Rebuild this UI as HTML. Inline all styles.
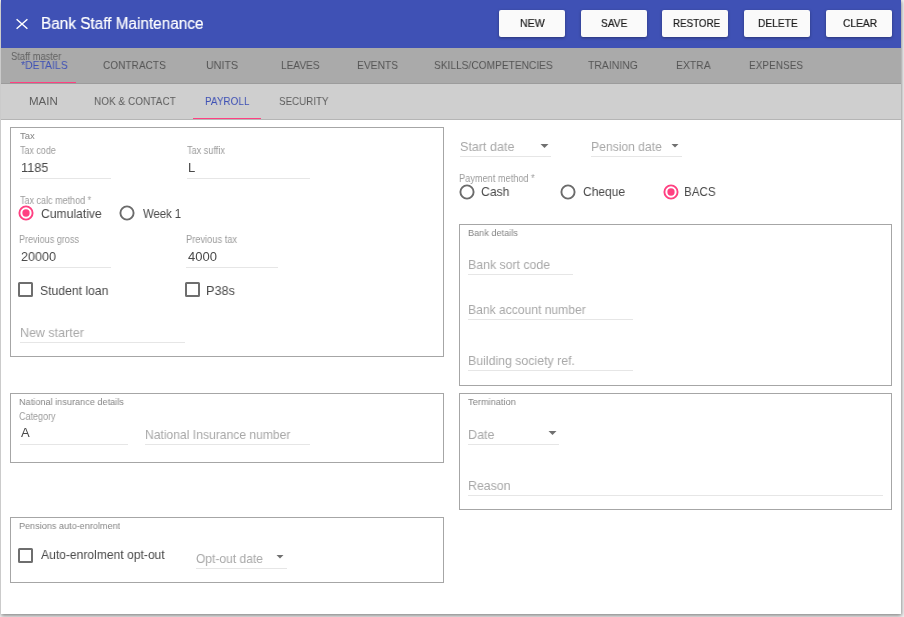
<!DOCTYPE html>
<html><head><meta charset="utf-8"><style>
html,body{margin:0;padding:0;width:904px;height:617px;overflow:hidden;background:#f0f0f0;}
body{position:relative;font-family:"Liberation Sans",sans-serif;}
.r{position:absolute;}
.t{position:absolute;white-space:nowrap;transform-origin:0 0;will-change:transform;}
</style></head><body>
<div class="r" style="left:1px;top:0;width:900px;height:614px;background:#fff;box-shadow:0 2px 4px rgba(0,0,0,0.3),1px 1px 3px rgba(0,0,0,0.2)"></div>
<div class="r" style="left:1px;top:0px;width:900px;height:48px;background:#3f51b5;"></div>
<div class="r" style="left:1px;top:48px;width:900px;height:36px;background:#aaaaaa;"></div>
<div class="r" style="left:1px;top:84px;width:900px;height:36px;background:#cfcfcf;"></div>
<div class="r" style="left:1px;top:119px;width:900px;height:1px;background:#b5b5b5;"></div>
<div class="r" style="left:1px;top:83px;width:900px;height:1px;background:#9c9c9c;"></div>
<div class="r" style="left:10px;top:82px;width:66px;height:1px;background:#ff4081;"></div>
<div class="r" style="left:193px;top:118px;width:68px;height:1px;background:#ff4081;"></div>
<svg class="r" style="left:14px;top:16px" width="16" height="16" viewBox="0 0 16 16"><path d="M2.6 3.2 L13.4 12.8 M13.4 3.2 L2.6 12.8" stroke="#fff" stroke-width="1.45" fill="none"/></svg>
<div class="r" style="left:499px;top:10px;width:66px;height:27px;background:#fafafa;border-radius:2px;box-shadow:0 1px 3px rgba(0,0,0,0.35)"></div>
<div class="r" style="left:581px;top:10px;width:66px;height:27px;background:#fafafa;border-radius:2px;box-shadow:0 1px 3px rgba(0,0,0,0.35)"></div>
<div class="r" style="left:662px;top:10px;width:66px;height:27px;background:#fafafa;border-radius:2px;box-shadow:0 1px 3px rgba(0,0,0,0.35)"></div>
<div class="r" style="left:744px;top:10px;width:66px;height:27px;background:#fafafa;border-radius:2px;box-shadow:0 1px 3px rgba(0,0,0,0.35)"></div>
<div class="r" style="left:826px;top:10px;width:66px;height:27px;background:#fafafa;border-radius:2px;box-shadow:0 1px 3px rgba(0,0,0,0.35)"></div>
<div class="r" style="left:10px;top:127px;width:434px;height:230px;box-sizing:border-box;border:1px solid #a6a6a6"></div>
<div class="r" style="left:10px;top:393px;width:434px;height:70px;box-sizing:border-box;border:1px solid #a6a6a6"></div>
<div class="r" style="left:10px;top:517px;width:434px;height:66px;box-sizing:border-box;border:1px solid #a6a6a6"></div>
<div class="r" style="left:459px;top:224px;width:433px;height:162px;box-sizing:border-box;border:1px solid #a6a6a6"></div>
<div class="r" style="left:459px;top:393px;width:433px;height:117px;box-sizing:border-box;border:1px solid #a6a6a6"></div>
<div class="r" style="left:20px;top:178px;width:91px;height:1px;background:#e6e6e6;"></div>
<div class="r" style="left:187px;top:178px;width:123px;height:1px;background:#e6e6e6;"></div>
<div class="r" style="left:20px;top:267px;width:91px;height:1px;background:#e6e6e6;"></div>
<div class="r" style="left:186px;top:267px;width:92px;height:1px;background:#e6e6e6;"></div>
<div class="r" style="left:20px;top:342px;width:165px;height:1px;background:#e6e6e6;"></div>
<div class="r" style="left:20px;top:444px;width:108px;height:1px;background:#e6e6e6;"></div>
<div class="r" style="left:145px;top:444px;width:165px;height:1px;background:#e6e6e6;"></div>
<div class="r" style="left:196px;top:568px;width:91px;height:1px;background:#e6e6e6;"></div>
<div class="r" style="left:460px;top:156px;width:91px;height:1px;background:#e6e6e6;"></div>
<div class="r" style="left:591px;top:156px;width:91px;height:1px;background:#e6e6e6;"></div>
<div class="r" style="left:468px;top:274px;width:105px;height:1px;background:#e6e6e6;"></div>
<div class="r" style="left:468px;top:319px;width:165px;height:1px;background:#e6e6e6;"></div>
<div class="r" style="left:468px;top:370px;width:165px;height:1px;background:#e6e6e6;"></div>
<div class="r" style="left:468px;top:444px;width:91px;height:1px;background:#e6e6e6;"></div>
<div class="r" style="left:468px;top:495px;width:415px;height:1px;background:#e6e6e6;"></div>
<svg class="r" style="left:15.5px;top:203px" width="20" height="20" viewBox="0 0 20 20"><circle cx="10" cy="10" r="6.6" fill="none" stroke="#ff4081" stroke-width="1.9"/><circle cx="10" cy="10" r="3.65" fill="#ff4081"/></svg>
<svg class="r" style="left:117px;top:203px" width="20" height="20" viewBox="0 0 20 20"><circle cx="10" cy="10" r="6.6" fill="none" stroke="#6b6b6b" stroke-width="1.9"/></svg>
<svg class="r" style="left:456.5px;top:182px" width="20" height="20" viewBox="0 0 20 20"><circle cx="10" cy="10" r="6.6" fill="none" stroke="#6b6b6b" stroke-width="1.9"/></svg>
<svg class="r" style="left:558px;top:182px" width="20" height="20" viewBox="0 0 20 20"><circle cx="10" cy="10" r="6.6" fill="none" stroke="#6b6b6b" stroke-width="1.9"/></svg>
<svg class="r" style="left:660.5px;top:182px" width="20" height="20" viewBox="0 0 20 20"><circle cx="10" cy="10" r="6.6" fill="none" stroke="#ff4081" stroke-width="1.9"/><circle cx="10" cy="10" r="3.65" fill="#ff4081"/></svg>
<div class="r" style="left:18px;top:282px;width:15px;height:15px;box-sizing:border-box;border:2px solid #6e6e6e;border-radius:1.5px"></div>
<div class="r" style="left:185px;top:282px;width:15px;height:15px;box-sizing:border-box;border:2px solid #6e6e6e;border-radius:1.5px"></div>
<div class="r" style="left:18px;top:548px;width:15px;height:15px;box-sizing:border-box;border:2px solid #6e6e6e;border-radius:1.5px"></div>
<svg class="r" style="left:0;top:0" width="904" height="617"><path d="M540.5 144 L548.5 144 L544.5 148 Z" fill="#707070"/></svg>
<svg class="r" style="left:0;top:0" width="904" height="617"><path d="M671.5 144 L678.5 144 L675 147.5 Z" fill="#707070"/></svg>
<svg class="r" style="left:0;top:0" width="904" height="617"><path d="M548.5 431 L556.5 431 L552.5 435 Z" fill="#707070"/></svg>
<svg class="r" style="left:0;top:0" width="904" height="617"><path d="M276.5 555 L283.5 555 L280 558.5 Z" fill="#707070"/></svg>
<span class="t" id="t0" style="left:40.74px;top:16.45px;font-size:16.0px;line-height:16.0px;color:#ffffff;-webkit-text-stroke:0.2px #fff;transform:scaleX(0.9579)">Bank Staff Maintenance</span>
<span class="t" id="t1" style="left:519.73px;top:18.26px;font-size:11.5px;line-height:11.5px;color:#1c1c1c;-webkit-text-stroke:0.2px #1c1c1c;transform:scaleX(0.9208)">NEW</span>
<span class="t" id="t2" style="left:600.54px;top:18.26px;font-size:11.5px;line-height:11.5px;color:#1c1c1c;-webkit-text-stroke:0.2px #1c1c1c;transform:scaleX(0.8798)">SAVE</span>
<span class="t" id="t3" style="left:672.80px;top:18.26px;font-size:11.5px;line-height:11.5px;color:#1c1c1c;-webkit-text-stroke:0.2px #1c1c1c;transform:scaleX(0.8494)">RESTORE</span>
<span class="t" id="t4" style="left:757.76px;top:18.26px;font-size:11.5px;line-height:11.5px;color:#1c1c1c;-webkit-text-stroke:0.2px #1c1c1c;transform:scaleX(0.8892)">DELETE</span>
<span class="t" id="t5" style="left:842.98px;top:18.26px;font-size:11.5px;line-height:11.5px;color:#1c1c1c;-webkit-text-stroke:0.2px #1c1c1c;transform:scaleX(0.8918)">CLEAR</span>
<span class="t" id="t6" style="left:11.08px;top:51.53px;font-size:10px;line-height:10px;color:#626262;transform:scaleX(0.9346)">Staff master</span>
<span class="t" id="t7" style="left:21.33px;top:60.26px;font-size:11.5px;line-height:11.5px;color:#3f51b5;transform:scaleX(0.9053)">*DETAILS</span>
<span class="t" id="t8" style="left:103.49px;top:60.26px;font-size:11.5px;line-height:11.5px;color:#555555;transform:scaleX(0.8773)">CONTRACTS</span>
<span class="t" id="t9" style="left:206.17px;top:60.26px;font-size:11.5px;line-height:11.5px;color:#555555;transform:scaleX(0.9309)">UNITS</span>
<span class="t" id="t10" style="left:280.67px;top:60.26px;font-size:11.5px;line-height:11.5px;color:#555555;transform:scaleX(0.8781)">LEAVES</span>
<span class="t" id="t11" style="left:357.16px;top:60.26px;font-size:11.5px;line-height:11.5px;color:#555555;transform:scaleX(0.8936)">EVENTS</span>
<span class="t" id="t12" style="left:434.04px;top:60.26px;font-size:11.5px;line-height:11.5px;color:#555555;transform:scaleX(0.8847)">SKILLS/COMPETENCIES</span>
<span class="t" id="t13" style="left:587.77px;top:60.26px;font-size:11.5px;line-height:11.5px;color:#555555;transform:scaleX(0.9066)">TRAINING</span>
<span class="t" id="t14" style="left:676.15px;top:60.26px;font-size:11.5px;line-height:11.5px;color:#555555;transform:scaleX(0.9043)">EXTRA</span>
<span class="t" id="t15" style="left:749.18px;top:60.26px;font-size:11.5px;line-height:11.5px;color:#555555;transform:scaleX(0.8723)">EXPENSES</span>
<span class="t" id="t16" style="left:29.06px;top:96.26px;font-size:11.5px;line-height:11.5px;color:#5e5e5e;transform:scaleX(0.9974)">MAIN</span>
<span class="t" id="t17" style="left:93.58px;top:96.26px;font-size:11.5px;line-height:11.5px;color:#5e5e5e;transform:scaleX(0.8720)">NOK &amp; CONTACT</span>
<span class="t" id="t18" style="left:204.88px;top:96.26px;font-size:11.5px;line-height:11.5px;color:#3f51b5;transform:scaleX(0.8661)">PAYROLL</span>
<span class="t" id="t19" style="left:279.06px;top:96.26px;font-size:11.5px;line-height:11.5px;color:#5e5e5e;transform:scaleX(0.8506)">SECURITY</span>
<span class="t" id="t20" style="left:19.79px;top:130.96px;font-size:9.5px;line-height:9.5px;color:#858585;transform:scaleX(1.0000)">Tax</span>
<span class="t" id="t21" style="left:19.80px;top:145.53px;font-size:10px;line-height:10px;color:#9c9c9c;transform:scaleX(0.8922)">Tax code</span>
<span class="t" id="t22" style="left:21.03px;top:160.99px;font-size:13.0px;line-height:13.0px;color:#4a4a4a;transform:scaleX(0.9787)">1185</span>
<span class="t" id="t23" style="left:186.79px;top:145.53px;font-size:10px;line-height:10px;color:#9c9c9c;transform:scaleX(0.9139)">Tax suffix</span>
<span class="t" id="t24" style="left:187.53px;top:160.99px;font-size:13px;line-height:13px;color:#4a4a4a;transform:scaleX(1.0000)">L</span>
<span class="t" id="t25" style="left:19.80px;top:195.53px;font-size:10px;line-height:10px;color:#9c9c9c;transform:scaleX(0.9014)">Tax calc method *</span>
<span class="t" id="t26" style="left:40.63px;top:206.99px;font-size:13.0px;line-height:13.0px;color:#4a4a4a;transform:scaleX(0.9336)">Cumulative</span>
<span class="t" id="t27" style="left:142.95px;top:206.99px;font-size:13.0px;line-height:13.0px;color:#4a4a4a;transform:scaleX(0.8714)">Week 1</span>
<span class="t" id="t28" style="left:19.26px;top:234.53px;font-size:10px;line-height:10px;color:#9c9c9c;transform:scaleX(0.9052)">Previous gross</span>
<span class="t" id="t29" style="left:20.87px;top:249.99px;font-size:13.0px;line-height:13.0px;color:#4a4a4a;transform:scaleX(0.9660)">20000</span>
<span class="t" id="t30" style="left:185.64px;top:234.53px;font-size:10px;line-height:10px;color:#9c9c9c;transform:scaleX(0.9280)">Previous tax</span>
<span class="t" id="t31" style="left:187.70px;top:249.99px;font-size:13.0px;line-height:13.0px;color:#4a4a4a;transform:scaleX(0.9960)">4000</span>
<span class="t" id="t32" style="left:40.20px;top:283.99px;font-size:13.0px;line-height:13.0px;color:#4a4a4a;transform:scaleX(0.9368)">Student loan</span>
<span class="t" id="t33" style="left:206.36px;top:283.99px;font-size:13.0px;line-height:13.0px;color:#4a4a4a;transform:scaleX(0.9717)">P38s</span>
<span class="t" id="t34" style="left:19.73px;top:325.99px;font-size:13.0px;line-height:13.0px;color:#a8a8a8;transform:scaleX(0.9597)">New starter</span>
<span class="t" id="t35" style="left:19.25px;top:396.96px;font-size:9.5px;line-height:9.5px;color:#858585;transform:scaleX(0.9641)">National insurance details</span>
<span class="t" id="t36" style="left:19.04px;top:411.53px;font-size:10px;line-height:10px;color:#9c9c9c;transform:scaleX(0.9014)">Category</span>
<span class="t" id="t37" style="left:21.27px;top:425.99px;font-size:13.0px;line-height:13.0px;color:#4a4a4a;transform:scaleX(1.0000)">A</span>
<span class="t" id="t38" style="left:144.91px;top:427.99px;font-size:13.0px;line-height:13.0px;color:#a8a8a8;transform:scaleX(0.9315)">National Insurance number</span>
<span class="t" id="t39" style="left:19.25px;top:520.96px;font-size:9.5px;line-height:9.5px;color:#858585;transform:scaleX(0.9573)">Pensions auto-enrolment</span>
<span class="t" id="t40" style="left:41.48px;top:547.99px;font-size:13.0px;line-height:13.0px;color:#4a4a4a;transform:scaleX(0.9304)">Auto-enrolment opt-out</span>
<span class="t" id="t41" style="left:196.43px;top:551.99px;font-size:13.0px;line-height:13.0px;color:#a8a8a8;transform:scaleX(0.9258)">Opt-out date</span>
<span class="t" id="t42" style="left:460.43px;top:139.99px;font-size:13.0px;line-height:13.0px;color:#a8a8a8;transform:scaleX(0.9656)">Start date</span>
<span class="t" id="t43" style="left:590.50px;top:139.99px;font-size:13.0px;line-height:13.0px;color:#a8a8a8;transform:scaleX(0.9334)">Pension date</span>
<span class="t" id="t44" style="left:459.25px;top:173.53px;font-size:10px;line-height:10px;color:#9c9c9c;transform:scaleX(0.9202)">Payment method *</span>
<span class="t" id="t45" style="left:480.88px;top:184.99px;font-size:13.0px;line-height:13.0px;color:#4a4a4a;transform:scaleX(0.9395)">Cash</span>
<span class="t" id="t46" style="left:582.59px;top:184.99px;font-size:13.0px;line-height:13.0px;color:#4a4a4a;transform:scaleX(0.9255)">Cheque</span>
<span class="t" id="t47" style="left:684.45px;top:184.99px;font-size:13.0px;line-height:13.0px;color:#4a4a4a;transform:scaleX(0.8951)">BACS</span>
<span class="t" id="t48" style="left:467.85px;top:227.96px;font-size:9.5px;line-height:9.5px;color:#858585;transform:scaleX(0.9638)">Bank details</span>
<span class="t" id="t49" style="left:468.29px;top:257.99px;font-size:13.0px;line-height:13.0px;color:#a8a8a8;transform:scaleX(0.9463)">Bank sort code</span>
<span class="t" id="t50" style="left:468.01px;top:302.99px;font-size:13.0px;line-height:13.0px;color:#a8a8a8;transform:scaleX(0.9306)">Bank account number</span>
<span class="t" id="t51" style="left:467.99px;top:353.99px;font-size:13.0px;line-height:13.0px;color:#a8a8a8;transform:scaleX(0.9487)">Building society ref.</span>
<span class="t" id="t52" style="left:468.49px;top:396.96px;font-size:9.5px;line-height:9.5px;color:#858585;transform:scaleX(0.9751)">Termination</span>
<span class="t" id="t53" style="left:468.27px;top:427.99px;font-size:13.0px;line-height:13.0px;color:#a8a8a8;transform:scaleX(0.9645)">Date</span>
<span class="t" id="t54" style="left:467.99px;top:478.99px;font-size:13.0px;line-height:13.0px;color:#a8a8a8;transform:scaleX(0.9511)">Reason</span>
</body></html>
